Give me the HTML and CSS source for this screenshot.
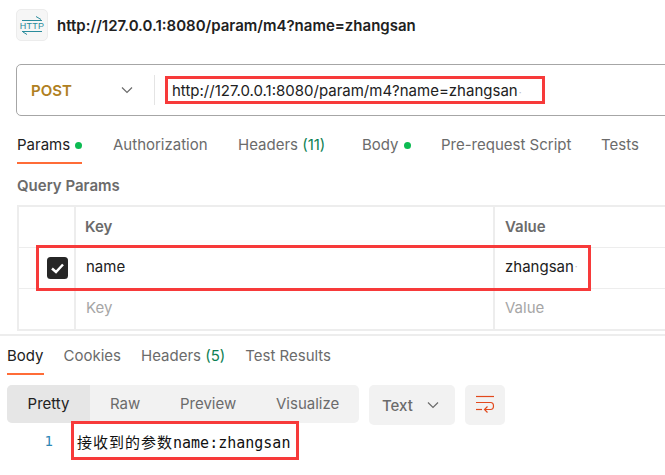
FILE: index.html
```html
<!DOCTYPE html>
<html lang="en">
<head>
<meta charset="utf-8">
<title>Request</title>
<link rel="stylesheet" href="styles.css">
</head>
<body>
<div class="page">
  <header class="title-row">
    <div class="http-icon">
      <svg width="32" height="32" viewBox="0 0 32 32" fill="none" stroke="#2a8c9c" stroke-width="1">
        <path d="M6 11.500H26M20 7.500L25 10.500"/>
        <path d="M6 22.500H26M7 23L11 25.500"/>
        <text x="16" y="20" text-anchor="middle" class="http-text">HTTP</text>
      </svg>
    </div>
    <div class="title">http://127.0.0.1:8080/param/m4?name=zhangsan</div>
  </header>

  <section class="url-bar">
    <div class="method">POST</div>
    <svg class="chev url-chev" width="12" height="8" viewBox="0 0 12 8"><path d="M1 1.500L6 6.500L11 1.500"/></svg>
    <div class="url-divider"></div>
    <div class="url-text">http://127.0.0.1:8080/param/m4?name=zhangsan<span class="dot-mark">·</span></div>
  </section>

  <nav class="req-tabs">
    <div class="tab tab-active t-params">Params<span class="dot"></span></div>
    <div class="tab t-auth">Authorization</div>
    <div class="tab t-head">Headers <span class="count">(11)</span></div>
    <div class="tab t-body">Body<span class="dot"></span></div>
    <div class="tab t-pre">Pre-request Script</div>
    <div class="tab">Tests</div>
  </nav>

  <h2 class="section-label">Query Params</h2>

  <div class="params">
    <div class="row row-head">
      <div class="cell c-check"></div>
      <div class="cell c-key">Key</div>
      <div class="cell c-val">Value</div>
    </div>
    <div class="row">
      <div class="cell c-check">
        <svg width="21" height="22" viewBox="0 0 21 22"><rect x="0" y="0" width="21" height="22" rx="3.500" fill="#262626"/><path d="M5 11.500L9 15L16 7.500" fill="none" stroke="#fff" stroke-width="2.500"/></svg>
      </div>
      <div class="cell c-key val-text">name</div>
      <div class="cell c-val val-text">zhangsan<span class="dot-mark">·</span></div>
    </div>
    <div class="row">
      <div class="cell c-check"></div>
      <div class="cell c-key ph">Key</div>
      <div class="cell c-val ph">Value</div>
    </div>
  </div>

  <nav class="res-tabs">
    <div class="rtab rtab-active">Body</div>
    <div class="rtab">Cookies</div>
    <div class="rtab">Headers <span class="count">(5)</span></div>
    <div class="rtab">Test Results</div>
  </nav>

  <div class="toolbar">
    <div class="segments">
      <div class="seg seg-on">Pretty</div>
      <div class="seg s-raw">Raw</div>
      <div class="seg s-prev">Preview</div>
      <div class="seg s-vis">Visualize</div>
    </div>
    <div class="format">Text
      <svg class="chev" width="12" height="8" viewBox="0 0 12 8"><path d="M1 1.500L6 6.500L11 1.500"/></svg>
    </div>
    <div class="wrap-btn">
      <svg width="20" height="20" viewBox="0 0 20 20" fill="none" stroke="#e2491d" stroke-width="1.200">
        <path d="M1 1.500H19"/>
        <path d="M1 7.500H15.500C19.500 7.500 19.500 14.500 15.500 14.500H10"/>
        <path d="M1 14.500H7"/>
        <path d="M12.500 11.500L9.500 14.500L12.500 17.500"/>
      </svg>
    </div>
  </div>

  <div class="code-line">
    <div class="ln">1</div>
    <div class="code"><span class="cjk">接收到的参数</span>name:zhangsan</div>
  </div>

  <div class="mark mark-url"></div>
  <div class="mark mark-row"></div>
  <div class="mark mark-code"></div>
</div>
</body>
</html>
```
FILE: styles.css
```css
* { box-sizing: border-box; }
html, body { margin: 0; padding: 0; background: #fff; }
body { font-family: Inter, "Liberation Sans", sans-serif; color: #212121; overflow: hidden; }
.page { position: relative; width: 665px; height: 475px; overflow: hidden; }

.title-row { display: flex; align-items: center; height: 32px; margin: 9px 0 0 16px; gap: 9px; }
.http-icon { width: 32px; height: 32px; background: #f6f6f6; border: 1px solid #ececec; border-radius: 5px; flex: none; }
.http-icon svg { display: block; margin: -1px; }
.http-text { font-family: "Liberation Sans Narrow", "Liberation Sans", sans-serif; font-size: 9px; fill: #2a8c9c; stroke: none; letter-spacing: 0.300px; }
.title { font-size: 15px; font-weight: 600; color: #212121; white-space: nowrap; }

.url-bar { display: flex; align-items: center; height: 52px; margin: 23px -8px 0 16px; border: 1px solid #a6a6a6; border-radius: 5px; padding-left: 14px; }
.method { width: 90px; font-size: 15px; font-weight: 600; color: #b08021; }
.chev { fill: none; stroke: #6b6b6b; stroke-width: 1.200; flex: none; }
.url-divider { width: 1px; height: 30px; background: #e4e4e4; margin-left: 21px; }
.url-text { font-size: 15px; margin-left: 17px; color: #212121; white-space: nowrap; }
.dot-mark { color: #bbb; font-size: 10px; margin-left: 1px; }

.req-tabs { display: flex; height: 33px; margin: 14px 0 0 17px; font-size: 15px; color: #6b6b6b; white-space: nowrap; }
.tab { height: 34px; line-height: 30px; border-bottom: 2px solid transparent; }
.tab-active { color: #212121; border-bottom-color: #ff6c37; }
.t-params { width: 65px; margin-right: 31px; }
.t-auth { width: 95px; margin-right: 30px; }
.t-head { width: 95px; margin-right: 29px; }
.t-body { width: 50px; margin-right: 29px; }
.t-pre { width: 131px; margin-right: 29px; }
.count { color: #0d7f53; }
.dot { display: inline-block; width: 7px; height: 7px; border-radius: 50%; background: #0cbb52; margin-left: 5px; vertical-align: 1px; }

.section-label { margin: 14px 0 0 17px; font-size: 15px; font-weight: 600; line-height: 17px; color: #6b6b6b; }

.params { margin: 11px 0 0 17px; width: 700px; border: solid #ededed; border-width: 2px 0 2px 2px; }
.row { display: flex; height: 41px; border-bottom: 1px solid #ededed; }
.row:last-child { height: 40px; border-bottom: 0; }
.cell { display: flex; align-items: center; font-size: 15px; padding-bottom: 4px; }
.c-check { width: 55px; justify-content: center; padding-left: 21px; padding-bottom: 0; }
.c-key { width: 419px; border-left: 2px solid #ededed; padding-left: 10px; }
.c-val { flex: 1; border-left: 2px solid #ededed; padding-left: 10px; }
.row-head .cell { font-weight: 600; color: #6b6b6b; padding-bottom: 2px; }
.row-head .c-key { padding-left: 9px; }
.row:last-child .cell { padding-bottom: 3px; }
.val-text { color: #212121; }
.ph { color: #a6a6a6; }

.res-tabs { display: flex; height: 40px; margin-top: 3px; padding-left: 7px; border-top: 2px solid #ededed; gap: 20px; font-size: 15px; color: #6b6b6b; }
.rtab { height: 39px; line-height: 39px; border-bottom: 2px solid transparent; white-space: nowrap; }
.rtab-active { color: #212121; border-bottom-color: #ff6c37; }

.toolbar { display: flex; margin: 11px 0 0 7px; gap: 10px; align-items: flex-start; }
.segments { display: flex; width: 352px; height: 38px; background: #f2f2f2; border-radius: 5px; font-size: 15px; color: #6b6b6b; overflow: hidden; }
.seg { line-height: 38px; }
.seg-on { width: 83px; background: #e6e6e6; color: #212121; text-align: center; }
.s-raw { margin-left: 20px; width: 50px; }
.s-prev { margin-left: 20px; width: 76px; }
.s-vis { margin-left: 20px; }
.format { display: flex; align-items: center; justify-content: space-between; width: 86px; height: 40px; padding: 0 16px 0 13px; background: #f2f2f2; border-radius: 5px; font-size: 15px; font-weight: 500; color: #6b6b6b; }
.wrap-btn { display: flex; align-items: center; justify-content: center; width: 40px; height: 40px; background: #f2f2f2; border-radius: 5px; }

.code-line { display: flex; align-items: center; height: 34px; margin-top: -1px; }
.ln { width: 77px; padding-right: 24px; text-align: right; font-family: "DejaVu Sans Mono", monospace; font-size: 14px; color: #2f88b5; }
.code { font-family: "DejaVu Sans Mono", "Noto Sans CJK SC", monospace; font-size: 15px; color: #111; white-space: nowrap; }
.cjk { font-family: "Noto Sans CJK SC", sans-serif; letter-spacing: 1px; }

.mark { position: absolute; border: 3px solid #f73a3a; pointer-events: none; }
.mark-url { left: 165px; top: 76px; width: 380px; height: 28px; }
.mark-row { left: 36px; top: 245px; width: 555px; height: 46px; }
.mark-code { left: 71px; top: 421px; width: 228px; height: 39px; }
```
